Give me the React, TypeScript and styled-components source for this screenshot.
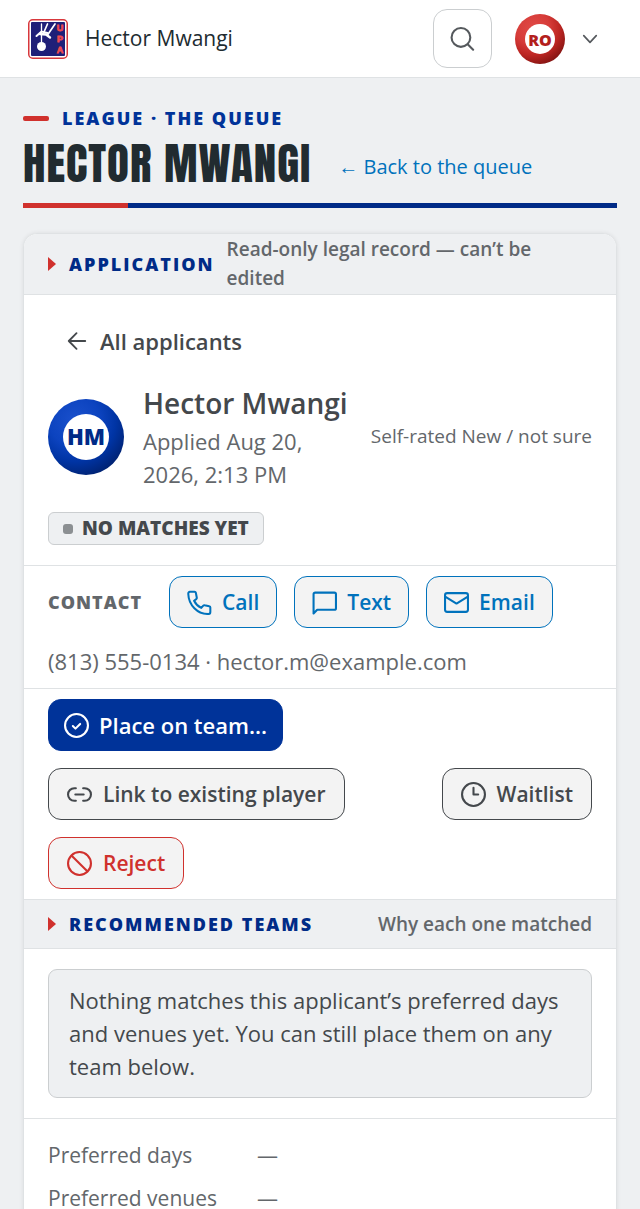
import React from 'react';
import styled, { createGlobalStyle, css } from 'styled-components';

const GlobalStyle = createGlobalStyle`
  *, *::before, *::after { box-sizing: border-box; }
  body {
    margin: 0;
    background: #eef0f2;
    color: #44484c;
    font-family: "Segoe UI", "Open Sans", "Noto Sans", sans-serif;
    font-size: 22px;
    line-height: 33px;
  }
  h1, h2, h3, p, dl, dd { margin: 0; }
  button, a { font: inherit; color: inherit; text-decoration: none; }
`;

const ink = '#44484c';
const muted = '#63676b';
const line = '#dfe2e4';
const navy = '#002b87';
const red = '#d0312d';
const blue = '#0072bc';

const TopBar = styled.header`
  display: flex;
  align-items: center;
  height: 78px;
  padding: 0 40px 0 28px;
  background: #fff;
  border-bottom: 1px solid ${line};
`;

const TopTitle = styled.span`
  flex: 1;
  margin-left: 17px;
  color: #212b30;
  font-size: 21px;
  font-weight: 500;
`;

const SearchButton = styled.button`
  display: grid;
  place-items: center;
  width: 59px;
  height: 59px;
  padding: 0;
  border: 1px solid #cbced0;
  border-radius: 14px;
  background: #fff;
  color: #55595d;
`;

const AccountButton = styled.button`
  display: flex;
  align-items: center;
  gap: 15px;
  margin-left: 23px;
  padding: 0;
  border: 0;
  background: none;
  color: #55595d;
`;

const Avatar = styled.span<{ $tone: 'red' | 'blue'; $large?: boolean }>`
  display: grid;
  flex: none;
  place-items: center;
  width: ${p => (p.$large ? 76 : 50)}px;
  height: ${p => (p.$large ? 76 : 50)}px;
  border-radius: 50%;
  background: ${p => p.$tone === 'red'
    ? 'radial-gradient(circle at 35% 28%, #e04a46 0%, #d63c39 35%, #bd2623 56%, #7d1210 82%)'
    : 'radial-gradient(circle at 35% 28%, #1a50cc 0%, #0c43bf 35%, #0034a4 56%, #00206c 82%)'};

  span {
    display: grid;
    place-items: center;
    width: ${p => (p.$large ? 46 : 30)}px;
    height: ${p => (p.$large ? 46 : 30)}px;
    border-radius: 50%;
    background: #fff;
    color: ${p => (p.$tone === 'red' ? '#b3201d' : navy)};
    font-size: ${p => (p.$large ? 22 : 16)}px;
    font-weight: 800;
  }
`;

const Page = styled.main`
  padding: 25px 23px 0;
`;

const Eyebrow = styled.p`
  display: flex;
  align-items: center;
  gap: 13px;
  color: #003399;
  font-size: 18px;
  font-weight: 800;
  line-height: 30px;
  letter-spacing: 2px;
  text-transform: uppercase;

  &::before {
    content: "";
    width: 26px;
    height: 5px;
    border-radius: 2px;
    background: ${red};
  }
`;

const TitleRow = styled.div`
  display: flex;
  align-items: center;
  gap: 27px;
  height: 60px;
`;

const Title = styled.h1`
  color: #212b30;
  font-family: Anton, "Roboto Condensed", "Open Sans", sans-serif;
  font-size: 45px;
  font-weight: 400;
  line-height: 60px;
  letter-spacing: 1px;
  text-transform: uppercase;
  white-space: nowrap;
`;

const BackLink = styled.a`
  padding-top: 6px;
  color: ${blue};
  font-size: 20px;
  white-space: nowrap;
`;

const Rule = styled.div`
  height: 5px;
  margin: 10px 0 25px;
  background: linear-gradient(90deg, ${red} 105px, ${navy} 105px);
`;

const Card = styled.article`
  overflow: hidden;
  margin-bottom: 24px;
  border: 1px solid ${line};
  border-radius: 14px;
  background: #fff;
  box-shadow: 0 0 4px rgba(0, 0, 0, 0.08);
`;

const Band = styled.header<{ $divided?: boolean }>`
  display: flex;
  align-items: center;
  gap: 12px;
  min-height: 50px;
  padding: 1px 24px;
  background: #eef0f2;
  border-top: ${p => (p.$divided ? 1 : 0)}px solid ${line};
  border-bottom: 1px solid ${line};
`;

const BandTitle = styled.h2`
  display: flex;
  flex: none;
  align-items: center;
  gap: 13px;
  color: ${navy};
  font-size: 18px;
  font-weight: 800;
  line-height: 29px;
  letter-spacing: 2px;
  text-transform: uppercase;
  white-space: nowrap;

  &::before {
    content: "";
    border-left: 8px solid ${red};
    border-top: 7px solid transparent;
    border-bottom: 7px solid transparent;
  }
`;

const BandNote = styled.p<{ $end?: boolean }>`
  margin-left: ${p => (p.$end ? 'auto' : 0)};
  color: ${muted};
  font-size: 19px;
  font-weight: 600;
  line-height: 29px;
`;

const Section = styled.section<{ $pad: number }>`
  padding: ${p => p.$pad}px 24px;

  & + & { border-top: 1px solid ${line}; }
`;

const AllLink = styled.a`
  display: flex;
  align-items: center;
  gap: 12px;
  width: fit-content;
  height: 52px;
  padding: 0 18px;
  color: ${ink};
  font-weight: 600;
`;

const Person = styled.div`
  display: flex;
  align-items: center;
  gap: 19px;
  margin: 15px 0 21px;
`;

const PersonText = styled.div`
  flex: 1;
  min-width: 0;
  color: ${muted};

  h3 {
    color: ${ink};
    font-size: 28px;
    font-weight: 600;
    line-height: 43px;
    white-space: nowrap;
  }
`;

const Rating = styled.p`
  color: ${muted};
  font-size: 19px;
  white-space: nowrap;
`;

const Badge = styled.p`
  display: flex;
  align-items: center;
  gap: 9px;
  width: fit-content;
  height: 33px;
  padding: 0 14px;
  border: 1px solid #cbced0;
  border-radius: 6px;
  background: #eef0f2;
  color: ${ink};
  font-size: 19px;
  font-weight: 800;
  text-transform: uppercase;

  &::before {
    content: "";
    width: 10px;
    height: 10px;
    border-radius: 3px;
    background: #8b8f92;
  }
`;

const Row = styled.div`
  display: flex;
  flex-wrap: wrap;
  align-items: center;
  gap: 17px;
`;

const ContactLabel = styled.h3`
  margin-right: 10px;
  color: ${muted};
  font-size: 18px;
  font-weight: 800;
  letter-spacing: 1px;
  text-transform: uppercase;
`;

const tones = {
  blue: css`padding: 0 17px; gap: 10px; border-color: ${blue}; color: ${blue};`,
  dark: css`border-color: ${ink}; color: ${ink};`,
  red: css`border-color: ${red}; color: ${red};`,
  solid: css`padding: 0 15px; gap: 10px; border-color: #003399; background: #003399; color: #fff; font-size: 22px;`,
};

const Button = styled.button<{ $tone: keyof typeof tones; $end?: boolean }>`
  display: inline-flex;
  align-items: center;
  gap: 11px;
  height: 52px;
  margin: 0 0 0 ${p => (p.$end ? 'auto' : 0)};
  padding: 0 18px;
  border: 1px solid;
  border-radius: 13px;
  background: #f3f3f3;
  font-size: 21px;
  font-weight: 600;
  white-space: nowrap;
  ${p => tones[p.$tone]}
`;

const ContactLine = styled.p`
  margin-top: 17px;
  color: ${muted};
`;

const Notice = styled.p`
  padding: 14px 20px;
  border: 1px solid #cbced0;
  border-radius: 9px;
  background: #eef0f2;
`;

const Facts = styled.dl`
  display: grid;
  grid-template-columns: 199px 1fr;
  gap: 10px;
  color: ${muted};
  font-size: 21px;
`;

const icons: Record<string, React.ReactNode> = {
  search: <><circle cx="10.500" cy="11" r="9" /><path d="m17.200 17.700 5 5" /></>,
  chevron: <path d="m4.500 8 7.500 8 7.500-8" />,
  back: <path d="M21 12H3M11.500 3.500 3 12l8.500 8.500" />,
  phone: (
    <g transform="translate(-3.600 -3.600) scale(1.300)" strokeWidth="1.500">
      <path d="M5 4h3.300a1 1 0 0 1 1 .8l.7 3.700a1 1 0 0 1-.4 1L8 10.700a11.500 11.500 0 0 0 5.300 5.300l1.500-1.700a1 1 0 0 1 1-.3l3.400.8a1 1 0 0 1 .8 1V19a1.500 1.500 0 0 1-1.500 1.500C10.500 20.500 4 14 3.700 5.500A1.500 1.500 0 0 1 5 4z" />
    </g>
  ),
  text: <path d="M1.500 22.500V4A1.500 1.500 0 0 1 3 2.500h18.500A1.500 1.500 0 0 1 23 4v13.500a1.500 1.500 0 0 1-1.500 1.500H5z" />,
  mail: <><rect x="1" y="3" width="22" height="18" rx="2" /><path d="m1.500 6.500 10.500 6.500 10.500-6.500" /></>,
  check: <><circle cx="12" cy="12" r="11" /><path d="m8.500 12.500 2.500 2.500 4.500-4.500" /></>,
  link: <><path d="M8.500 6H7a6 6 0 0 0 0 12h1.500M15.500 6H17a6 6 0 0 1 0 12h-1.500M8 12h8" /></>,
  clock: <><circle cx="12" cy="12" r="11" /><path d="M12 5.500V12h4.500" /></>,
  ban: <><circle cx="12" cy="12" r="11" /><path d="m4.500 4.500 15 15" /></>,
};

const Icon = ({ name, size = 25 }: { name: string; size?: number }) => (
  <svg width={size} height={size} viewBox="0 0 24 24" fill="none" stroke="currentColor"
    strokeWidth="2" strokeLinecap="round" strokeLinejoin="round" aria-hidden="true">
    {icons[name]}
  </svg>
);

const Logo = () => (
  <svg width="40" height="40" viewBox="0 0 40 40" role="img" aria-label="UPA">
    <rect x="0.750" y="0.750" width="38.500" height="38.500" rx="4" fill="#fff" stroke="#d8383c" strokeWidth="1.500" />
    <rect x="3" y="3" width="34" height="34" rx="1" fill="#1f1f78" />
    <g stroke="#fff" fill="none" strokeLinecap="round">
      <path d="M13.500 5v19" strokeWidth="1.300" />
      <path d="m19.500 5-3.500 8M27 5l-7.500 11" strokeWidth="1.700" />
      <path d="m8.500 17 5-4.500 6 1.500" strokeWidth="2" />
      <path d="m12 15 6 .5 4 3" strokeWidth="2.400" />
    </g>
    <circle cx="13.500" cy="27.500" r="4.500" fill="#fff" />
    <g fill="#f04a50" stroke="#f04a50" strokeWidth="0.800" fontFamily="Liberation Sans, sans-serif" fontSize="9" fontWeight="700" textAnchor="middle">
      <text x="32" y="12">U</text>
      <text x="32" y="23">P</text>
      <text x="32" y="34">A</text>
    </g>
  </svg>
);

export default function App() {
  return (
    <>
      <GlobalStyle />
      <TopBar>
        <Logo />
        <TopTitle>Hector Mwangi</TopTitle>
        <SearchButton aria-label="Search"><Icon name="search" /></SearchButton>
        <AccountButton aria-label="Account menu">
          <Avatar $tone="red"><span>RO</span></Avatar>
          <Icon name="chevron" size={20} />
        </AccountButton>
      </TopBar>
      <Page>
        <Eyebrow>League · The Queue</Eyebrow>
        <TitleRow>
          <Title>Hector Mwangi</Title>
          <BackLink href="#queue">← Back to the queue</BackLink>
        </TitleRow>
        <Rule />
        <Card>
          <Band>
            <BandTitle>Application</BandTitle>
            <BandNote>Read-only legal record — can’t be edited</BandNote>
          </Band>
          <Section $pad={20}>
            <AllLink href="#applicants"><Icon name="back" size={22} />All applicants</AllLink>
            <Person>
              <Avatar $tone="blue" $large><span>HM</span></Avatar>
              <PersonText>
                <h3>Hector Mwangi</h3>
                <p>Applied Aug 20, 2026, 2:13 PM</p>
              </PersonText>
              <Rating>Self-rated New / not sure</Rating>
            </Person>
            <Badge>No matches yet</Badge>
          </Section>
          <Section $pad={10}>
            <Row>
              <ContactLabel>Contact</ContactLabel>
              <Button $tone="blue"><Icon name="phone" />Call</Button>
              <Button $tone="blue"><Icon name="text" />Text</Button>
              <Button $tone="blue"><Icon name="mail" />Email</Button>
            </Row>
            <ContactLine>(813) 555-0134 · hector.m@example.com</ContactLine>
          </Section>
          <Section $pad={10}>
            <Row>
              <Button $tone="solid"><Icon name="check" />Place on team...</Button>
              <Button $tone="dark"><Icon name="link" />Link to existing player</Button>
              <Button $tone="dark" $end><Icon name="clock" />Waitlist</Button>
              <Button $tone="red"><Icon name="ban" />Reject</Button>
            </Row>
          </Section>
          <Band $divided>
            <BandTitle>Recommended teams</BandTitle>
            <BandNote $end>Why each one matched</BandNote>
          </Band>
          <Section $pad={20}>
            <Notice>Nothing matches this applicant’s preferred days and venues yet. You can still place them on any team below.</Notice>
          </Section>
          <Section $pad={20}>
            <Facts>
              <dt>Preferred days</dt><dd>—</dd>
              <dt>Preferred venues</dt><dd>—</dd>
            </Facts>
          </Section>
        </Card>
      </Page>
    </>
  );
}
